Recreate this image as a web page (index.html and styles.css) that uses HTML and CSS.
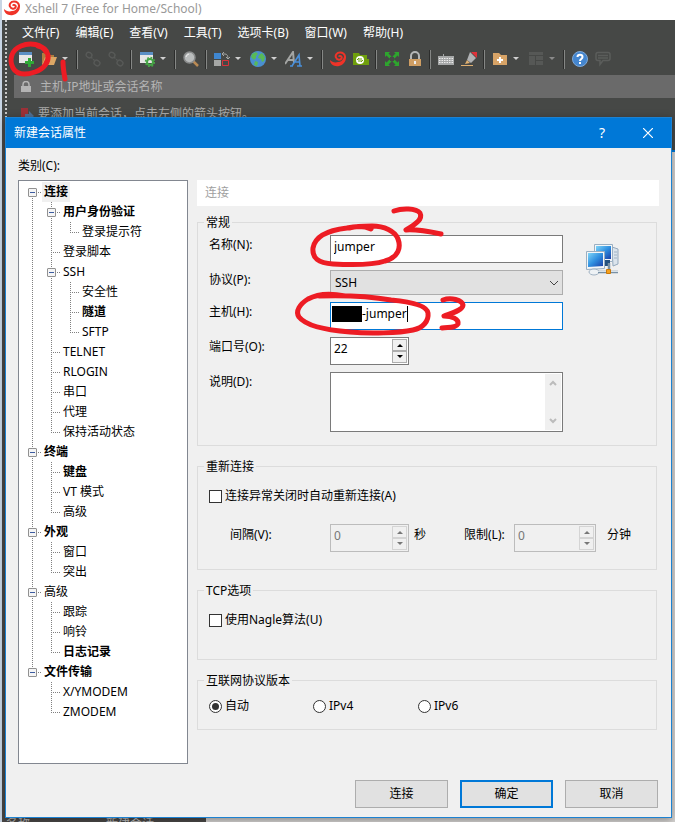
FILE: index.html
```html
<!DOCTYPE html>
<html lang="zh-CN">
  <head>
    <title>Xshell 7</title>
    <meta charset="utf-8">
    <link rel="stylesheet" href="styles.css">
  </head>
  <body>

  <svg class="defs" width="0" height="0" aria-hidden="true">
    <symbol id="swirl" viewBox="0 0 16 16">
      <path fill="#ef3328" d="M0 9c0 4 4 7 9 6 4-1 7-4 7-9l-2 0c-1 3-3 5-6 5-3 1-6 0-8-2z"/>
      <path fill="none" stroke="#ef3328" stroke-width="2" d="M15 7C15.500 3 12.500 1.500 10 1.500 6.500 1.500 5 4.500 6 6.500 7 9 10.500 9.500 11.500 7.500 12.500 5 9.500 4 9 5.800"/>
    </symbol>
    <symbol id="chain" viewBox="0 0 16 16">
      <g fill="none" stroke="#585a58" stroke-width="1.400">
        <rect x="1" y="1.500" width="6" height="5" rx="2.500" transform="rotate(35 4 4)"/>
        <rect x="9" y="9.500" width="6" height="5" rx="2.500" transform="rotate(35 12 12)"/>
        <path d="M6 6l4 4" stroke-dasharray="2 1"/>
      </g>
    </symbol>
    <symbol id="up" viewBox="0 0 10 6"><path d="M2 5l3-3 3 3z" fill="currentColor"/></symbol>
    <symbol id="down" viewBox="0 0 10 6"><path d="M2 1l3 3 3-3z" fill="currentColor"/></symbol>
  </svg>

  <div class="app">
    <header class="app-title">
      <svg width="16" height="16"><use href="#swirl"/></svg>
      <span>Xshell 7 (Free for Home/School)</span>
    </header>

    <div class="bars">
      <nav class="menu">
        <a href="#file">文件(F)</a>
        <a href="#edit">编辑(E)</a>
        <a href="#view">查看(V)</a>
        <a href="#tools">工具(T)</a>
        <a href="#tab">选项卡(B)</a>
        <a href="#window">窗口(W)</a>
        <a href="#help">帮助(H)</a>
      </nav>

      <div class="toolbar">
        <button class="tool" aria-label="新建">
          <svg width="16" height="16" viewBox="0 0 16 16"><path fill="#e6e6e6" d="M1 1h13v11H1z"/><path fill="#5b8fc4" d="M1 1h13v3H1z"/><path fill="#2fa836" d="M10 7h3v3h3v3h-3v3h-3v-3H7v-3h3z"/></svg>
        </button>
        <button class="tool" aria-label="打开">
          <svg width="16" height="16" viewBox="0 0 16 16"><path fill="#b07d3f" d="M1 2h5l2 2h5v9H1z"/><path fill="#dca765" d="M4 6h12l-3 8H1z"/></svg>
        </button>
        <button class="drop" aria-label="更多"><svg width="10" height="6"><use href="#down"/></svg></button>
        <span class="sep"></span>
        <button class="tool" aria-label="重新连接" disabled><svg width="16" height="16"><use href="#chain"/></svg></button>
        <button class="tool" aria-label="断开" disabled><svg width="16" height="16"><use href="#chain"/></svg></button>
        <span class="sep"></span>
        <button class="tool" aria-label="属性">
          <svg width="16" height="16" viewBox="0 0 16 16"><path fill="#e6e6e6" d="M1 1h13v11H1z"/><path fill="#5b8fc4" d="M1 1h13v3H1z"/><circle cx="11" cy="11" r="3" fill="none" stroke="#45a545" stroke-width="2"/><circle cx="11" cy="11" r="4.500" fill="none" stroke="#45a545" stroke-width="1.500" stroke-dasharray="1.800 1.730"/></svg>
        </button>
        <button class="drop" aria-label="更多"><svg width="10" height="6"><use href="#down"/></svg></button>
        <span class="sep"></span>
        <button class="tool" aria-label="查找">
          <svg width="16" height="16" viewBox="0 0 16 16"><path d="M10 10l5 5" stroke="#b98a54" stroke-width="2.500"/><circle cx="6.500" cy="6.500" r="5.500" fill="#b9bcbc" stroke="#8a8c8c" stroke-width="1.500"/><path d="M3 6a4 4 0 0 1 3-3" stroke="#eee" fill="none"/></svg>
        </button>
        <span class="sep"></span>
        <button class="tool" aria-label="排列">
          <svg width="16" height="16" viewBox="0 0 16 16"><path fill="#3f86cf" d="M0 2h7v6H0z"/><path fill="#a5a7a5" d="M0 9h7v6H0z"/><path fill="none" stroke="#d9333a" d="M8.500 9.500h6v5h-6z"/><path fill="none" stroke="#a5a7a5" d="M8 3h3q3 0 3 5M10 1L8 3l2 2M12 6l2 2 2-2"/></svg>
        </button>
        <button class="drop" aria-label="更多"><svg width="10" height="6"><use href="#down"/></svg></button>
        <button class="tool" aria-label="语言">
          <svg width="16" height="16" viewBox="0 0 16 16"><circle cx="8" cy="8" r="8" fill="#4a8fd0"/><path fill="#58b957" d="M2 3l4-2 2 2-2 2v2L4 9 1 6zM9 4l3-2 3 4-1 4-2 1-1-3-3-1zM5 10l3 1-1 4-3-1z"/></svg>
        </button>
        <button class="drop" aria-label="更多"><svg width="10" height="6"><use href="#down"/></svg></button>
        <button class="tool" aria-label="字体">
          <svg width="18" height="16" viewBox="0 0 18 16"><path d="M0 13L8 1l1 11M3 9h6" fill="none" stroke="#a3a5a3" stroke-width="2"/><path d="M5 15h3M12 15h5M7 15l7-11 1 11M9 11h6" fill="none" stroke="#4a8fd8" stroke-width="1.600"/></svg>
        </button>
        <button class="drop" aria-label="更多"><svg width="10" height="6"><use href="#down"/></svg></button>
        <span class="sep"></span>
        <button class="tool" aria-label="Xshell"><svg width="16" height="16"><use href="#swirl"/></svg></button>
        <button class="tool" aria-label="Xftp">
          <svg width="16" height="16" viewBox="0 0 16 16"><path fill="#6f9f0c" d="M0 2h6l1 2h7v10H0zM14 8h2v6h-2z"/><circle cx="7" cy="9" r="4" fill="#fff"/><path d="M6 7v4M8 7v4M4 9l2-2M10 9l-2 2" stroke="#6f9f0c"/></svg>
        </button>
        <span class="sep"></span>
        <button class="tool" aria-label="全屏">
          <svg width="16" height="16" viewBox="0 0 16 16"><path fill="#2ea52e" d="M1 1h5L4.500 2.500l3 3-2 2-3-3L1 6zM15 1h-5l1.500 1.500-3 3 2 2 3-3L15 6zM1 15h5l-1.500-1.500 3-3-2-2-3 3L1 10zM15 15h-5l1.500-1.500-3-3 2-2 3 3L15 10z"/><path fill="#464846" d="M6 6h4v4H6z"/></svg>
        </button>
        <button class="tool" aria-label="锁定">
          <svg width="16" height="16" viewBox="0 0 16 16"><path d="M4 8V5a4 4 0 0 1 8 0v3" fill="none" stroke="#b5b7b7" stroke-width="2"/><path fill="#cf9e63" d="M2 8h12v7H2z"/><path fill="#eee" d="M7 10h2v3H7z"/></svg>
        </button>
        <span class="sep"></span>
        <button class="tool" aria-label="键盘">
          <svg width="16" height="16" viewBox="0 0 16 16"><path fill="#a6a8a8" d="M0 5h16v9H0zM5 3h1v2H5z"/><path d="M1 7.500h14M1 9.500h14M1 11.500h14" stroke="#ececec" stroke-dasharray="1.500 1"/></svg>
        </button>
        <button class="tool" aria-label="高亮">
          <svg width="16" height="16" viewBox="0 0 16 16"><path fill="#b0b2b4" d="M9 1l6 6-5 5-4-3z"/><path fill="#e0323a" d="M10 1h6v6z"/><path fill="#e0b070" d="M6 9l3 3-5 1zM0 14h12v1H0z"/></svg>
        </button>
        <span class="sep"></span>
        <button class="tool" aria-label="新建文件夹">
          <svg width="16" height="16" viewBox="0 0 16 16"><path fill="#d8a467" d="M1 2h6l2 2h6v10H1z"/><path fill="#fff" d="M7 6h2v2h2v2H9v2H7v-2H5V8h2z"/></svg>
        </button>
        <button class="drop" aria-label="更多"><svg width="10" height="6"><use href="#down"/></svg></button>
        <button class="tool" aria-label="布局" disabled>
          <svg width="16" height="16" viewBox="0 0 16 16"><path fill="#565856" d="M1 1h14v13H1z"/><path d="M1 4.500h14M7.500 5v9M8 9.500h7" stroke="#464846"/></svg>
        </button>
        <button class="drop dim" aria-label="更多" disabled><svg width="10" height="6"><use href="#down"/></svg></button>
        <span class="sep"></span>
        <button class="tool" aria-label="帮助">
          <svg width="16" height="16" viewBox="0 0 16 16"><circle cx="8" cy="8" r="7.500" fill="#4486cf" stroke="#7fa9d8"/><path d="M5.500 6c0-3 5-3 5 0 0 2-2.500 2-2.500 4M8 11v2" fill="none" stroke="#fff" stroke-width="2"/></svg>
        </button>
        <button class="tool" aria-label="反馈" disabled>
          <svg width="16" height="16" viewBox="0 0 16 16"><path d="M3 1.500h10q2 0 2 2v4q0 2-2 2H8l-3 4v-4H3q-2 0-2-2v-4q0-2 2-2zM3 4.500h10M3 7h10" fill="none" stroke="#5b5d5b" stroke-width="1.500"/></svg>
        </button>
      </div>

      <label class="address">
        <svg width="10" height="12" viewBox="0 0 10 12"><path d="M2 6V3.500a3 3 0 0 1 6 0V6" fill="none" stroke="#b4b4b4" stroke-width="1.500"/><path fill="#b4b4b4" d="M0 5h10v6H0z"/></svg>
        <input type="text" placeholder="主机,IP地址或会话名称">
      </label>

      <p class="hint">
        <svg width="13" height="14" viewBox="0 0 13 14"><path fill="#9c3138" d="M0 0h7v9H0z"/><path fill="#4f6f94" d="M4 6h4V3l5 5-5 5v-3H4z"/></svg>
        要添加当前会话，点击左侧的箭头按钮。
      </p>
    </div>

    <div class="workspace">
      <div class="side"><span>名称</span><span>新建会话</span></div>
      <div class="terminal"></div>
    </div>
  </div>

  <form class="dialog">
    <header class="dialog-title">
      <h1>新建会话属性</h1>
      <button type="button" aria-label="帮助">?</button>
      <button type="button" aria-label="关闭">
        <svg width="10" height="10" viewBox="0 0 10 10"><path d="M0 0l10 10M10 0L0 10" stroke="#fff" stroke-width="1.200"/></svg>
      </button>
    </header>

    <div class="dialog-body">
      <p class="category">类别(C):</p>

      <ul class="tree">
        <li><div class="node open"><button type="button" class="toggle" aria-label="折叠"></button><b class="selected">连接</b></div>
          <ul>
            <li><div class="node open"><button type="button" class="toggle" aria-label="折叠"></button><b>用户身份验证</b></div>
              <ul>
                <li><div class="node">登录提示符</div></li>
              </ul>
            </li>
            <li><div class="node">登录脚本</div></li>
            <li><div class="node open"><button type="button" class="toggle" aria-label="折叠"></button>SSH</div>
              <ul>
                <li><div class="node">安全性</div></li>
                <li><div class="node"><b>隧道</b></div></li>
                <li><div class="node">SFTP</div></li>
              </ul>
            </li>
            <li><div class="node">TELNET</div></li>
            <li><div class="node">RLOGIN</div></li>
            <li><div class="node">串口</div></li>
            <li><div class="node">代理</div></li>
            <li><div class="node">保持活动状态</div></li>
          </ul>
        </li>
        <li><div class="node open"><button type="button" class="toggle" aria-label="折叠"></button><b>终端</b></div>
          <ul>
            <li><div class="node"><b>键盘</b></div></li>
            <li><div class="node">VT 模式</div></li>
            <li><div class="node">高级</div></li>
          </ul>
        </li>
        <li><div class="node open"><button type="button" class="toggle" aria-label="折叠"></button><b>外观</b></div>
          <ul>
            <li><div class="node">窗口</div></li>
            <li><div class="node">突出</div></li>
          </ul>
        </li>
        <li><div class="node open"><button type="button" class="toggle" aria-label="折叠"></button>高级</div>
          <ul>
            <li><div class="node">跟踪</div></li>
            <li><div class="node">响铃</div></li>
            <li><div class="node"><b>日志记录</b></div></li>
          </ul>
        </li>
        <li><div class="node open"><button type="button" class="toggle" aria-label="折叠"></button><b>文件传输</b></div>
          <ul>
            <li><div class="node">X/YMODEM</div></li>
            <li><div class="node">ZMODEM</div></li>
          </ul>
        </li>
      </ul>

      <div class="page">
        <h2>连接</h2>

        <fieldset class="general">
          <legend>常规</legend>
          <div class="fields">
            <label for="name">名称(N):</label>
            <input id="name" class="text" type="text" value="jumper">

            <label for="protocol">协议(P):</label>
            <div class="select">
              <select id="protocol"><option>SSH</option></select>
              <svg width="10" height="6" viewBox="0 0 10 6"><path d="M1 1l4 4 4-4" fill="none" stroke="#444"/></svg>
            </div>

            <label for="host">主机(H):</label>
            <input id="host" class="text active" type="text" value="-jumper">

            <label for="port">端口号(O):</label>
            <div class="spin">
              <input id="port" type="text" value="22">
              <div class="arrows">
                <button type="button" aria-label="增加"><svg width="10" height="6"><use href="#up"/></svg></button>
                <button type="button" aria-label="减少"><svg width="10" height="6"><use href="#down"/></svg></button>
              </div>
            </div>

            <label for="desc">说明(D):</label>
            <div class="memo">
              <textarea id="desc"></textarea>
              <div class="scroll">
                <svg width="8" height="6" viewBox="0 0 8 6"><path d="M1 5l3-3 3 3" fill="none" stroke="#bcbcbc" stroke-width="2"/></svg>
                <svg width="8" height="6" viewBox="0 0 8 6"><path d="M1 1l3 3 3-3" fill="none" stroke="#bcbcbc" stroke-width="2"/></svg>
              </div>
            </div>
          </div>

          <svg class="computers" width="34" height="34" viewBox="0 0 34 34">
            <defs>
              <linearGradient id="screen" x1="0" y1="0" x2="1" y2="1"><stop offset="0" stop-color="#7fd4f7"/><stop offset=".5" stop-color="#2f8fe0"/><stop offset="1" stop-color="#1b3fa8"/></linearGradient>
            </defs>
            <path fill="#dbe4ec" stroke="#94a9bd" d="M26 4l6 2v15l-5 2z"/>
            <path d="M28 9h3M28 12h3M28 15h3" stroke="#9fb2c4"/>
            <path fill="#f3f6f8" stroke="#9aafc2" d="M8.500 1.500h18v17h-18z"/>
            <path fill="url(#screen)" d="M10 3h15v13H10z"/>
            <path fill="#24507e" d="M19 17h5v6h-5z"/>
            <path fill="#f3f6f8" stroke="#9aafc2" d="M.5 8.500h18v17l-18 1z"/>
            <path fill="url(#screen)" d="M2 10h15v13l-15 1z"/>
            <ellipse cx="8" cy="29" rx="5" ry="3" fill="#eef2f5" stroke="#a3b4c4"/>
            <path d="M12 29h20M23 20v9" stroke="#7890a5" stroke-width="2.500"/>
            <path d="M12 28.500h20" stroke="#d8e2ea"/>
            <path fill="#f5a01c" stroke="#c9780a" d="M20.500 26.500h4v4h-4z"/>
          </svg>
        </fieldset>

        <fieldset class="reconnect">
          <legend>重新连接</legend>
          <label class="check"><input type="checkbox">连接异常关闭时自动重新连接(A)</label>
          <div class="timing">
            <label for="interval">间隔(V):</label>
            <div class="spin off">
              <input id="interval" type="text" value="0" disabled>
              <div class="arrows">
                <button type="button" aria-label="增加" disabled><svg width="10" height="6"><use href="#up"/></svg></button>
                <button type="button" aria-label="减少" disabled><svg width="10" height="6"><use href="#down"/></svg></button>
              </div>
            </div>
            <span>秒</span>
            <label for="limit">限制(L):</label>
            <div class="spin off">
              <input id="limit" type="text" value="0" disabled>
              <div class="arrows">
                <button type="button" aria-label="增加" disabled><svg width="10" height="6"><use href="#up"/></svg></button>
                <button type="button" aria-label="减少" disabled><svg width="10" height="6"><use href="#down"/></svg></button>
              </div>
            </div>
            <span>分钟</span>
          </div>
        </fieldset>

        <fieldset class="tcp">
          <legend>TCP选项</legend>
          <label class="check"><input type="checkbox">使用Nagle算法(U)</label>
        </fieldset>

        <fieldset class="version">
          <legend>互联网协议版本</legend>
          <label class="check"><input type="radio" name="ip" checked>自动</label>
          <label class="check"><input type="radio" name="ip">IPv4</label>
          <label class="check"><input type="radio" name="ip">IPv6</label>
        </fieldset>
      </div>
    </div>

    <footer class="actions">
      <button type="button">连接</button>
      <button type="button" class="primary">确定</button>
      <button type="button">取消</button>
    </footer>
  </form>

  <!-- red pen marks for steps 1, 2 and 3 -->
  <svg class="ink" width="675" height="822" viewBox="0 0 675 822" aria-hidden="true">
    <path d="M46 52C42 44 30 42 21 46 11 50 9 60 13 68c4 7 13 7 22 4 9-3 14-10 13-17-1-5-5-8-10-9"/>
    <path d="M63 62c0 6 1 11 2 17"/>
    <path d="M371 229c-8-4-16-3-24-1-17 2-32 8-34 20-1 10 5 15 20 16 18 1 40 1 52-3 14-4 16-14 13-22-3-8-14-13-26-13-9 0-16 0-22 2"/>
    <path d="M394 211c8-3 22-3 26 2 3 6-4 11-14 17 10-1 20 1 35 4"/>
    <path d="M345 296c-14-3-28-2-37 3-8 5-13 12-9 18 7 9 26 13 51 15 20 2 49 1 63-2 10-2 16-9 15-17-1-7-14-11-37-13-17-3-41-5-72-4"/>
    <path d="M443 300c8-3 19 0 20 5 0 5-11 8-19 11 8 0 15 3 14 8-2 4-9 3-16 4"/>
  </svg>

  </body>
</html>
```

FILE: styles.css
```css
* {
  box-sizing: border-box;
}
body {
  margin: 0;
  font-family: "Noto Sans", "Noto Sans CJK SC", sans-serif;
  font-size: 12px;
  line-height: 20px;
  color: #000;
}
button, input, select, textarea {
  font: inherit;
  color: inherit;
  margin: 0;
  padding: 0;
  border: 0;
  border-radius: 0;
  background: none;
  outline: 0;
}
svg {
  display: block;
  flex: none;
}
h1, h2, p, ul {
  margin: 0;
  padding: 0;
  font-size: 12px;
  font-weight: normal;
}
.defs {
  position: absolute;
}

/* main window */
.app {
  display: flex;
  flex-direction: column;
  height: 100vh;
  min-height: 822px;
  border-left: 2px solid #c8d5e4;
}
.app-title {
  display: flex;
  gap: 5px;
  height: 20px;
  padding: 0 2px;
  line-height: 18px;
  background: #fff;
  color: #999;
}
.bars {
  height: 97px;
  overflow: hidden;
  padding-left: 12px;
  background: repeating-linear-gradient(#c8c8c8 0 2px, transparent 2px 4px) 3px 0 / 2px 100% no-repeat #464846;
}
.menu {
  display: flex;
  gap: 16px;
  height: 26px;
  padding-left: 8px;
  line-height: 26px;
}
.menu a {
  color: #fff;
  text-decoration: none;
}
.toolbar {
  display: flex;
  align-items: center;
  height: 29px;
  padding-bottom: 3px;
}
.tool {
  display: flex;
  justify-content: center;
  width: 23px;
}
.drop {
  width: 13px;
  color: #d0d0d0;
}
.dim {
  color: #8a8a8a;
}
.sep {
  width: 2px;
  height: 19px;
  margin: 0 3px;
  background: linear-gradient(to right, #2c2d2c 50%, #858785 50%);
}
.address {
  display: flex;
  align-items: center;
  gap: 9px;
  height: 23px;
  padding-left: 7px;
  background: #6a6a6a;
}
.address input {
  flex: 1;
}
.address input::placeholder {
  color: #b4b4b4;
  opacity: 1;
}
.hint {
  display: flex;
  gap: 4px;
  padding: 6px 7px;
  color: #a8a8a8;
}
.hint svg {
  margin-top: 4px;
}
.workspace {
  display: flex;
  flex: 1;
  background: #464846;
}
.side {
  display: flex;
  align-items: flex-end;
  width: 204px;
  height: 705px;
  overflow: hidden;
  padding-left: 4px;
  color: #bbb;
  background: #4a4846;
}
.side span {
  width: 101px;
  height: 8px;
}
.terminal {
  flex: 1;
  margin-top: 33px;
  border-top: 2px solid #0078d7;
  background: #d4d2d0;
}

/* session dialog */
.dialog {
  position: absolute;
  top: 117px;
  left: 5px;
  right: 3px;
  border: 1px solid #1c82d2;
  background: #f0f0f0;
  box-shadow: 0 2px 8px rgba(0,0,0,0.35);
}
.dialog-title {
  display: flex;
  height: 30px;
  line-height: 30px;
  padding-left: 8px;
  background: #0078d7;
  color: #fff;
}
.dialog-title h1 {
  flex: 1;
}
.dialog-title button {
  display: flex;
  justify-content: center;
  align-items: center;
  width: 46px;
  font-size: 14px;
}
.dialog-body {
  display: grid;
  grid-template-columns: 170px 1fr;
  column-gap: 9px;
  padding: 8px 12px 0;
}
.category {
  grid-column: 1 / 3;
  height: 24px;
}

.tree, .tree ul {
  list-style: none;
}
.tree {
  height: 584px;
  padding-top: 1px;
  border: 1px solid #828790;
  background: #fff;
}
.tree ul {
  margin-left: 19px;
}
.tree li {
  background: repeating-linear-gradient(#808080 0 1px, transparent 1px 2px) 13px 0 / 1px 100% no-repeat;
}
.tree > li:first-child {
  background-position: 13px 10px;
}
.tree li:last-child {
  background-size: 1px 10px;
}
.node {
  display: flex;
  align-items: center;
  height: 20px;
  padding-left: 25px;
  background: repeating-linear-gradient(to right, #808080 0 1px, transparent 1px 2px) 13px 10px / 10px 1px no-repeat;
}
.open {
  padding-left: 9px;
}
.toggle {
  width: 9px;
  height: 9px;
  margin-right: 7px;
  border: 1px solid #919191;
  border-radius: 1px;
  background: linear-gradient(#3c5ca0, #3c5ca0) center / 5px 1px no-repeat #f5f5f5;
}
.selected {
  margin-left: -2px;
  padding: 0 2px;
  background: #f0f0f0;
}

.page h2 {
  height: 26px;
  padding-left: 8px;
  line-height: 26px;
  background: #fff;
  color: #a0a0a0;
}
fieldset {
  min-width: 0;
  margin: 12px 2px 0 0;
  padding: 12px 11px 17px;
  border: 1px solid #dcdcdc;
}
legend {
  margin-left: -5px;
  padding: 0 2px;
  line-height: 17px;
  height: 16px;
}
.general {
  display: flex;
  gap: 23px;
  margin-top: 8px;
  padding-top: 5px;
  padding-bottom: 13px;
}
.fields {
  display: grid;
  grid-template-columns: 121px 233px;
  row-gap: 7px;
}
.text, .memo {
  border: 1px solid #7a7a7a;
  background: #fff;
}
.text {
  height: 28px;
  padding: 0 3px 5px;
}
/* host: masked prefix and text cursor */
.active {
  padding-left: 31px;
  border-color: #0078d7;
  background:
    linear-gradient(#000, #000) 1px 3px / 30px 16px no-repeat,
    linear-gradient(#000, #000) 76px 3px / 1px 16px no-repeat,
    #fff;
}
.select {
  display: grid;
  align-items: center;
}
.select select {
  grid-area: 1 / 1;
  height: 25px;
  padding-left: 4px;
  border: 1px solid #adadad;
  background: #e1e1e1;
  appearance: none;
}
.select svg {
  grid-area: 1 / 1;
  justify-self: end;
  margin-right: 4px;
  pointer-events: none;
}
.spin {
  display: flex;
  width: 79px;
  height: 28px;
  border: 1px solid #7a7a7a;
  background: #fff;
}
.spin input {
  flex: 1;
  min-width: 0;
  padding: 0 3px 4px;
}
.arrows {
  display: flex;
  flex-direction: column;
  width: 17px;
  padding: 1px;
}
.arrows button {
  display: flex;
  flex: 1;
  align-items: center;
  justify-content: center;
  border: 1px solid #adadad;
  background: #f0f0f0;
}
.off {
  border-color: #bcbcbc;
  background: #f0f0f0;
  color: #777;
}
.off button {
  border-color: #d4d4d4;
}
.memo {
  display: flex;
  height: 60px;
  padding: 1px;
}
.memo textarea {
  flex: 1;
  min-width: 0;
  resize: none;
}
.scroll {
  display: flex;
  flex-direction: column;
  justify-content: space-between;
  align-items: center;
  width: 16px;
  padding: 6px 0;
  background: #f0f0f0;
}
.computers {
  margin-top: 8px;
}
.check {
  display: flex;
  align-items: center;
  gap: 3px;
}
.check input {
  display: grid;
  place-items: center;
  width: 13px;
  height: 13px;
  border: 1px solid #333;
  background: #fff;
  appearance: none;
}
.check input[type=radio] {
  border-radius: 50%;
}
.check input[type=radio]:checked::after {
  content: "";
  width: 7px;
  height: 7px;
  border-radius: 50%;
  background: #333;
}
.timing {
  display: grid;
  grid-template-columns: 100px 79px 55px 50px 82px 1fr;
  margin: 18px 0 0 21px;
  line-height: 22px;
}
.timing .spin {
  width: auto;
}
.timing span {
  padding-left: 5px;
}
.timing span:last-child {
  padding-left: 11px;
}
.tcp {
  padding-bottom: 29px;
}
.version {
  display: grid;
  grid-template-columns: 104px 105px 1fr;
  padding-top: 8px;
  padding-bottom: 13px;
}
.actions {
  display: flex;
  justify-content: flex-end;
  gap: 12px;
  padding: 16px 13px 9px;
}
.actions button {
  width: 93px;
  height: 28px;
  border: 1px solid #adadad;
  background: #e1e1e1;
}
.actions .primary {
  border: 2px solid #0078d7;
}

.ink {
  position: absolute;
  top: 0;
  left: 0;
  pointer-events: none;
}
.ink path {
  fill: none;
  stroke: #ed1c24;
  stroke-width: 5;
  stroke-linecap: round;
  stroke-linejoin: round;
}
```
